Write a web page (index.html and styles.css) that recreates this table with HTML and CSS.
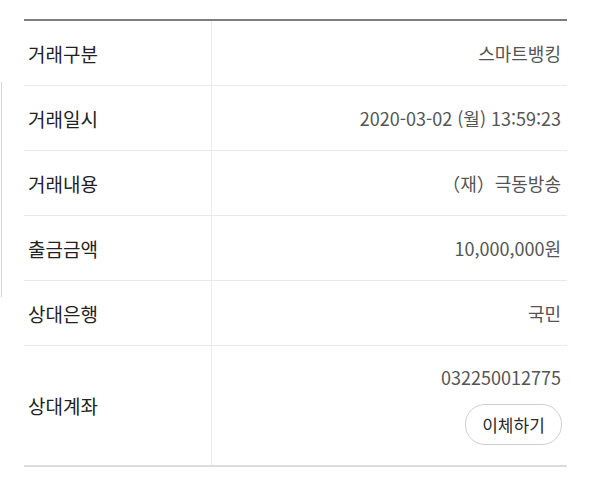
FILE: index.html
```html
<!DOCTYPE html>
<html lang="ko">
<head>
<meta charset="utf-8">
<link rel="stylesheet" href="styles.css">
</head>
<body>
<div class="edge"></div>
<div class="detail">
  <div class="row">
    <div class="label">거래구분</div>
    <div class="value">스마트뱅킹</div>
  </div>
  <div class="row">
    <div class="label">거래일시</div>
    <div class="value">2020-03-02 (월) 13:59:23</div>
  </div>
  <div class="row">
    <div class="label">거래내용</div>
    <div class="value">（재）극동방송</div>
  </div>
  <div class="row">
    <div class="label">출금금액</div>
    <div class="value">10,000,000원</div>
  </div>
  <div class="row">
    <div class="label">상대은행</div>
    <div class="value">국민</div>
  </div>
  <div class="row row-tall">
    <div class="label">상대계좌</div>
    <div class="value value-stack">
      <div class="account">032250012775</div>
      <button class="btn">이체하기</button>
    </div>
  </div>
</div>
</body>
</html>
```
FILE: styles.css
```css
html, body {
  margin: 0;
  padding: 0;
  background: #fff;
}
body {
  position: relative;
  width: 594px;
  height: 489px;
  overflow: hidden;
  font-family: "Noto Sans CJK KR", "Noto Sans", sans-serif;
}
.edge {
  position: absolute;
  left: 1px;
  top: 82px;
  width: 1px;
  height: 215px;
  background: #d6d6d6;
}
.detail {
  margin: 19px 0 0 24px;
  width: 543px;
  border-top: 2px solid #7d7d7d;
  border-bottom: 2px solid #dcdcdc;
}
.row {
  display: grid;
  grid-template-columns: 188px 1fr;
  height: 64px;
  border-bottom: 1px solid #e9e9e9;
}
.row:last-child {
  border-bottom: none;
  height: 119px;
}
.label {
  display: flex;
  align-items: center;
  padding-left: 4px;
  font-size: 19px;
  color: #222;
  border-right: 1px solid #ececec;
}
.value {
  display: flex;
  align-items: center;
  justify-content: flex-end;
  padding-right: 6px;
  font-size: 18px;
  color: #555;
}
.value-stack {
  flex-direction: column;
  align-items: flex-end;
  justify-content: flex-start;
  padding-top: 18px;
  gap: 14px;
}
.account {
  line-height: 26px;
}
.btn {
  width: 97px;
  height: 41px;
  border: 1px solid #cfcfcf;
  border-radius: 20px;
  background: #fff;
  font-family: inherit;
  font-size: 17px;
  color: #2a2a2a;
  padding: 0;
  margin-right: -1px;
}
```
